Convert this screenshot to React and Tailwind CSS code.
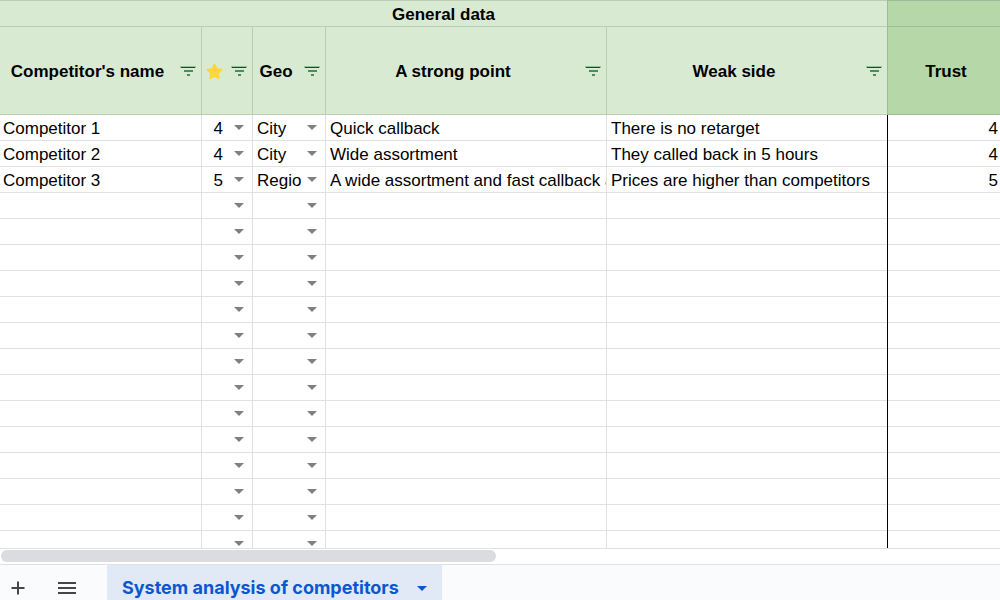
const columns = [
  { key: 'name', label: "Competitor's name", width: 'w-[202px]' },
  { key: 'rating', label: 'Rating', width: 'w-[51px]' },
  { key: 'geo', label: 'Geo', width: 'w-[73px]' },
  { key: 'strong', label: 'A strong point', width: 'w-[28.1%]' },
  { key: 'weak', label: 'Weak side', width: 'w-[28.1%]' },
];

const competitors = [
  {
    name: 'Competitor 1',
    rating: '4',
    geo: 'City',
    strong: 'Quick callback',
    weak: 'There is no retarget',
    trust: '4',
  },
  {
    name: 'Competitor 2',
    rating: '4',
    geo: 'City',
    strong: 'Wide assortment',
    weak: 'They called back in 5 hours',
    trust: '4',
  },
  {
    name: 'Competitor 3',
    rating: '5',
    geo: 'Region',
    strong: 'A wide assortment and fast callback a',
    weak: 'Prices are higher than competitors',
    trust: '5',
  },
];

const emptyRow = { name: '', rating: '', geo: '', strong: '', weak: '', trust: '' };
const rows = [...competitors, ...Array.from({ length: 30 }, () => emptyRow)];

const ratings = ['', '1', '2', '3', '4', '5'];
const regions = ['', 'City', 'Region', 'Country'];

function FilterIcon() {
  return (
    <svg width="16" height="10" viewBox="0 0 16 10" aria-hidden="true">
      <rect x="0" y="0" width="16" height="2" fill="#9dbf9f" />
      <rect x="1" y="1" width="14" height="1" fill="#0f5223" />
      <rect x="4" y="4" width="9" height="2" fill="#4f8a61" />
      <rect x="7" y="8" width="3" height="2" fill="#4f8a61" />
    </svg>
  );
}

function StarIcon() {
  return (
    <svg width="17" height="17" viewBox="0 0 17 17" role="img" aria-label="Rating">
      <path
        d="M8.5 1.6 L10.6 6 L15.4 6.7 L11.9 10.1 L12.8 15 L8.5 12.7 L4.2 15 L5.1 10.1 L1.6 6.7 L6.4 6 Z"
        fill="#fdd63b"
        stroke="#fdd63b"
        strokeWidth="2"
        strokeLinejoin="round"
      />
    </svg>
  );
}

function HeaderCell({ column }) {
  return (
    <th className="h-[88px] border-b border-r border-[#bccdb7] bg-[#d9ead3] p-0 font-bold">
      <div className="flex items-center">
        <span className="flex min-w-0 flex-1 justify-center whitespace-nowrap pt-[2px]">
          {column.key === 'rating' ? <StarIcon /> : column.label}
        </span>
        <button
          type="button"
          aria-label={`Filter ${column.label}`}
          className="flex h-6 w-[26px] shrink-0 items-center justify-center"
        >
          <FilterIcon />
        </button>
      </div>
    </th>
  );
}

function SelectCell({ label, value, options, className }) {
  return (
    <td className="border-b border-r border-[#e1e1e1] p-0">
      <div className="relative">
        <select
          aria-label={label}
          defaultValue={value}
          className={`block h-[25px] w-full appearance-none bg-transparent pt-[2px] leading-[23px] outline-none ${className}`}
        >
          {options.map((option) => (
            <option key={option} value={option}>
              {option}
            </option>
          ))}
        </select>
        <svg
          width="10"
          height="5"
          viewBox="0 0 10 5"
          fill="#808080"
          aria-hidden="true"
          className="pointer-events-none absolute right-2 top-[10px]"
        >
          <path d="M0 0h10L5 5z" />
        </svg>
      </div>
    </td>
  );
}

function TextCell({ children, className }) {
  return (
    <td className={`h-[26px] border-b border-[#e1e1e1] pb-0 pt-[2px] ${className}`}>
      <div className="overflow-hidden whitespace-nowrap">{children}</div>
    </td>
  );
}

function Sheet() {
  return (
    <table className="w-full table-fixed border-separate border-spacing-0 text-[17px] leading-[23px] text-black">
      <colgroup>
        {columns.map((column) => (
          <col key={column.key} className={column.width} />
        ))}
        <col />
      </colgroup>
      <thead>
        <tr>
          <th
            colSpan={5}
            className="h-[27px] border-y border-r border-[#bccdb7] bg-[#d9ead3] px-0 pb-0 pt-[2px] font-bold"
          >
            General data
          </th>
          <td className="border-y border-[#9fbb95] bg-[#b6d7a8] p-0 shadow-[-1px_0_0_#9fbb95]" />
        </tr>
        <tr>
          {columns.map((column) => (
            <HeaderCell key={column.key} column={column} />
          ))}
          <th className="border-b border-[#9fbb95] bg-[#b6d7a8] pb-0 pl-1 pr-0 pt-[2px] font-bold shadow-[-1px_0_0_#9fbb95]">
            Trust
          </th>
        </tr>
      </thead>
      <tbody>
        {rows.map((row, i) => (
          <tr key={i}>
            <TextCell className="border-r pl-[3px] pr-0">{row.name}</TextCell>
            <SelectCell
              label={`Rating, row ${i + 1}`}
              value={row.rating}
              options={ratings}
              className="pr-[29px] text-right"
            />
            <SelectCell
              label={`Geo, row ${i + 1}`}
              value={row.geo}
              options={regions}
              className="pl-1 pr-6"
            />
            <TextCell className="border-r pl-1 pr-0">{row.strong}</TextCell>
            <TextCell className="pl-1 pr-0">{row.weak}</TextCell>
            <TextCell className="pl-0 pr-[2px] text-right shadow-[-1px_0_0_#000]">{row.trust}</TextCell>
          </tr>
        ))}
      </tbody>
    </table>
  );
}

function SheetTabs() {
  return (
    <div className="flex border-t border-[#e1e1e1] bg-[#f9fbfd]">
      <button type="button" aria-label="Add sheet" className="flex w-9 items-center justify-center pt-[11px]">
        <svg width="14" height="14" viewBox="0 0 14 14" stroke="#444746" strokeWidth="2" aria-hidden="true">
          <path d="M7 0.5v13M0.5 7h13" />
        </svg>
      </button>
      <button type="button" aria-label="All sheets" className="ml-[13px] flex w-9 items-center justify-center pt-[11px]">
        <svg width="18" height="12" viewBox="0 0 18 12" stroke="#444746" strokeWidth="2" aria-hidden="true">
          <path d="M0 1h18M0 6h18M0 11h18" />
        </svg>
      </button>
      <button
        type="button"
        className="ml-[22px] flex items-center gap-[18px] bg-[#e1e9f7] px-[15px] pt-[11px] font-['Inter',sans-serif] text-[18px] font-bold leading-6 text-[#0b57d0]"
      >
        System analysis of competitors
        <svg width="10" height="5" viewBox="0 0 10 5" fill="#0b57d0" aria-hidden="true">
          <path d="M0 0h10L5 5z" />
        </svg>
      </button>
    </div>
  );
}

export default function App() {
  return (
    <div className="flex h-screen flex-col overflow-hidden bg-white font-['Liberation_Sans',Arial,sans-serif]">
      <div className="min-h-0 flex-1 overflow-hidden">
        <Sheet />
      </div>
      <div className="border-t border-[#e1e1e1] px-px pb-[2px] pt-px">
        <div className="h-3 w-[49.6%] rounded-full bg-[#dadce0]" />
      </div>
      <SheetTabs />
    </div>
  );
}
